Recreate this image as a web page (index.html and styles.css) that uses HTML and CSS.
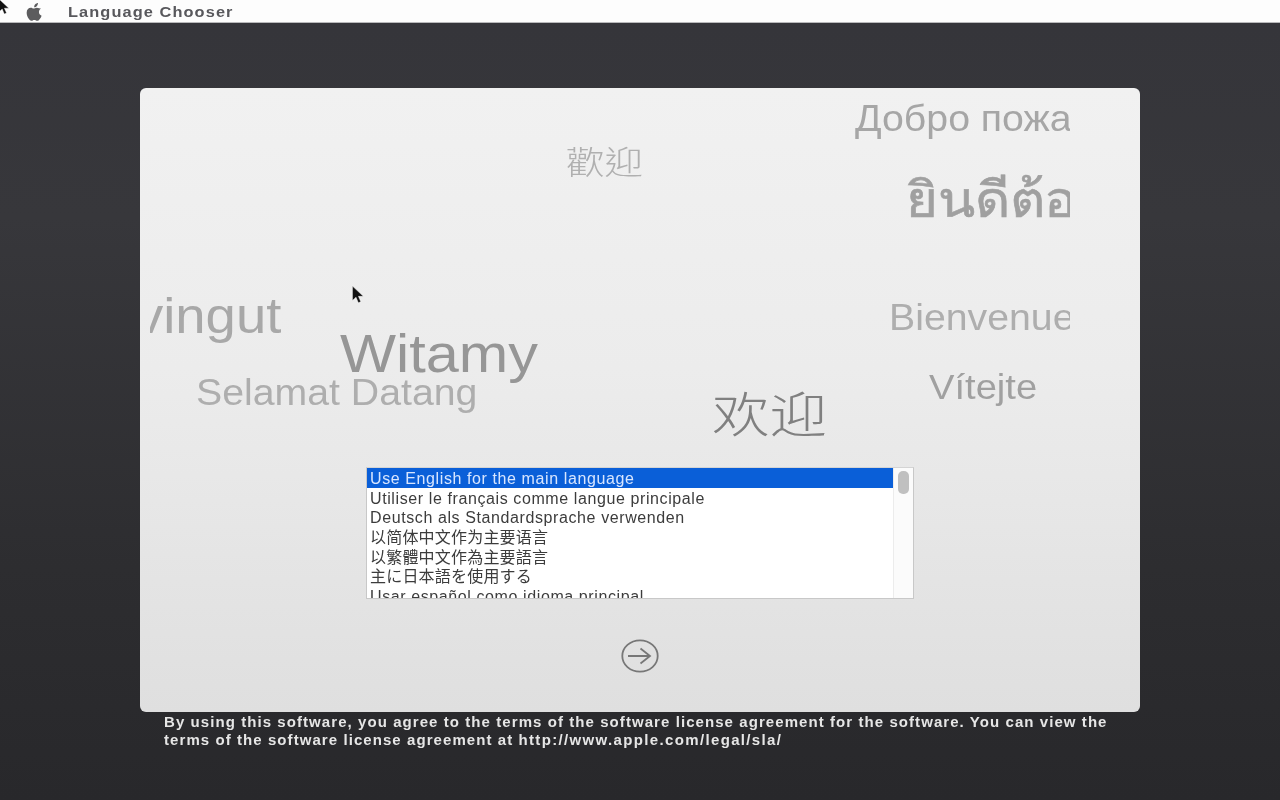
FILE: index.html
```html
<!DOCTYPE html>
<html lang="en">
<head>
<meta charset="utf-8">
<title>Language Chooser</title>
<link rel="stylesheet" href="styles.css">
</head>
<body>
<header class="menubar">
  <svg class="apple" viewBox="0 0 18 20" width="18" height="20"><path d="M12.600 1c.1 1.200-.3 2.300-1 3.100-.7.800-1.800 1.400-2.900 1.300-.1-1.100.4-2.300 1.100-3C10.500 1.600 11.700 1 12.600 1zM15.900 6.900c-1.400.9-2.200 2.100-2.200 3.600 0 1.800 1 3.100 2.800 3.900-.4 1.200-1 2.300-1.700 3.300-.8 1.100-1.600 2.200-2.900 2.200-1.200 0-1.600-.8-3.100-.8s-2 .8-3.100.8c-1.300 0-2.200-1.200-3-2.400C1.500 15.700.7 13.400.7 11.300c0-3.400 2.200-5.200 4.400-5.200 1.200 0 2.200.8 3 .8s1.900-.9 3.300-.9c1.800 0 3.400.9 4.500.9z"/></svg>
  <span class="app-name">Language Chooser</span>
</header>
<svg class="cursor cursor-top" viewBox="0 0 12 18" width="12" height="18"><path d="M1 1v13l3.200-3 2.100 5 2.200-.9-2.100-4.900h4.400z"/></svg>
<main class="stage">
  <section class="panel">
    <div class="words">
      <span class="word w-ru">Добро пожаловать</span>
      <span class="word w-tc">歡迎</span>
      <span class="word w-th">ยินดีต้อนรับ</span>
      <span class="word w-da">Benvingut</span>
      <span class="word w-pl">Witamy</span>
      <span class="word w-ms">Selamat Datang</span>
      <span class="word w-fr">Bienvenue</span>
      <span class="word w-cs">Vítejte</span>
      <span class="word w-sc">欢迎</span>
    </div>
    <svg class="cursor cursor-mid" viewBox="0 0 12 18" width="14" height="20"><path d="M1 1v13l3.200-3 2.100 5 2.200-.9-2.100-4.900h4.400z"/></svg>
    <div class="listbox">
      <ul class="options">
        <li class="selected">Use English for the main language</li>
        <li>Utiliser le français comme langue principale</li>
        <li>Deutsch als Standardsprache verwenden</li>
        <li class="cjk">以简体中文作为主要语言</li>
        <li class="cjk">以繁體中文作為主要語言</li>
        <li class="cjk">主に日本語を使用する</li>
        <li>Usar español como idioma principal</li>
      </ul>
      <div class="scrollbar"><div class="thumb"></div></div>
    </div>
    <button class="next" type="button" aria-label="Continue">
      <svg viewBox="0 0 38 34" width="38" height="34"><ellipse cx="19" cy="17" rx="17.700" ry="15.700"/><path d="M7 17h22M19.500 9.500l9.500 7.500-9.500 7.500"/></svg>
    </button>
  </section>
  <p class="legal">By using this software, you agree to the terms of the software license agreement for the software. You can view the terms of the software license agreement at <span class="url">http://www.apple.com/legal/sla/</span></p>
</main>
</body>
</html>
```
FILE: styles.css
```css
* { box-sizing: border-box; }
html, body { height: 100%; }
body {
  margin: 0;
  height: 800px;
  overflow: hidden;
  position: relative;
  background: #2b2b2e;
  font-family: "Liberation Sans", "Noto Sans CJK SC", sans-serif;
}
.menubar {
  height: 23px;
  background: #fdfdfd;
  border-bottom: 1px solid #b9b9bb;
  display: flex;
  align-items: center;
  padding-left: 26px;
  gap: 25px;
}
.apple { width: 17px; height: 19px; fill: #5c5c5e; filter: blur(.4px); }
.app-name {
  font-weight: 700;
  font-size: 15px;
  letter-spacing: 1px;
  color: #58585c;
  filter: blur(.4px);
  transform: scaleX(1.09);
  transform-origin: left center;
}
.cursor { position: absolute; fill: #111; stroke: #fff; stroke-width: .4; }
.cursor-top { left: -2px; top: -2px; }
.cursor-mid { left: 211px; top: 197px; }
.stage {
  height: 777px;
  padding-top: 65px;
  display: flex;
  flex-direction: column;
  align-items: center;
  background: linear-gradient(180deg, #35353a 0%, #37373b 25%, #2d2d30 70%, #28282b 100%);
}
.panel {
  position: relative;
  width: 1000px;
  height: 624px;
  flex: none;
  border-radius: 6px;
  background: linear-gradient(180deg, #f1f1f1 0%, #ececec 45%, #dfdfdf 100%);
  display: flex;
  flex-direction: column;
  align-items: center;
}
.words {
  position: relative;
  align-self: flex-start;
  width: 920px;
  height: 379px;
  flex: none;
  margin-left: 10px;
  overflow: hidden;
  filter: blur(.7px);
}
.word {
  position: absolute;
  white-space: nowrap;
  line-height: 1;
  color: #a8a8a8;
  transform: scaleX(1.09);
  transform-origin: left center;
}
.w-ru { left: 705px; top: 13px; font-size: 36px; color: #a6a6a6; }
.w-tc { left: 416px; top: 56px; font-size: 32px; color: #b0b0b0; font-weight: 300; font-family: "Noto Sans CJK TC", sans-serif; transform: scaleX(1.2); }
.w-th { left: 756px; top: 85px; font-size: 50px; font-weight: 400; -webkit-text-stroke: .6px #a0a0a0; color: #a0a0a0; font-family: "Noto Sans", "DejaVu Sans", sans-serif; }
.w-da { right: 789px; top: 203px; font-size: 50px; color: #a8a8a8; transform-origin: right center; }
.w-pl { left: 190px; top: 238px; font-size: 54px; color: #969696; transform: scaleX(1.1); }
.w-ms { left: 46px; top: 287px; font-size: 36px; color: #aeaeae; }
.w-fr { left: 739px; top: 212px; font-size: 36px; color: #aeaeae; }
.w-cs { left: 779px; top: 281px; font-size: 35px; color: #a0a0a0; }
.w-sc { left: 562px; top: 299px; font-size: 48px; color: #808080; font-weight: 300; font-family: "Noto Sans CJK SC", sans-serif; transform: scaleX(1.2); }
.listbox {
  width: 548px;
  height: 132px;
  flex: none;
  display: flex;
  background: #fff;
  border: 1px solid #c8c8c8;
  border-top-color: #d4d4d4;
  overflow: hidden;
}
.options {
  list-style: none;
  margin: 0;
  padding: 0;
  flex: 1;
  min-width: 0;
  font-size: 16px;
  color: #3c3c3c;
}
.options li {
  height: 19.700px;
  line-height: 21px;
  padding-left: 3px;
  white-space: nowrap;
  letter-spacing: .6px;
  filter: blur(.35px);
}
.options .cjk { letter-spacing: .2px; }
.options .selected { background: #0a5fd8; color: #d8e6ff; }
.scrollbar {
  width: 20px;
  flex: none;
  background: #fbfbfb;
  border-left: 1px solid #ececec;
  padding: 3px 0 0 4px;
}
.thumb { width: 11px; height: 23px; border-radius: 5px; background: #c0c0c0; }
.next {
  margin-top: 40px;
  padding: 0;
  border: 0;
  background: none;
  width: 38px;
  height: 34px;
}
.next svg { display: block; fill: none; stroke: #777; stroke-width: 1.800; filter: blur(.3px); }
.legal {
  width: 952px;
  margin: 1px 0 0;
  font-size: 15px;
  font-weight: 700;
  line-height: 18px;
  letter-spacing: 1.070px;
  color: #e6e6e6;
  filter: blur(.35px);
}
.url { letter-spacing: 1.350px; }
```
